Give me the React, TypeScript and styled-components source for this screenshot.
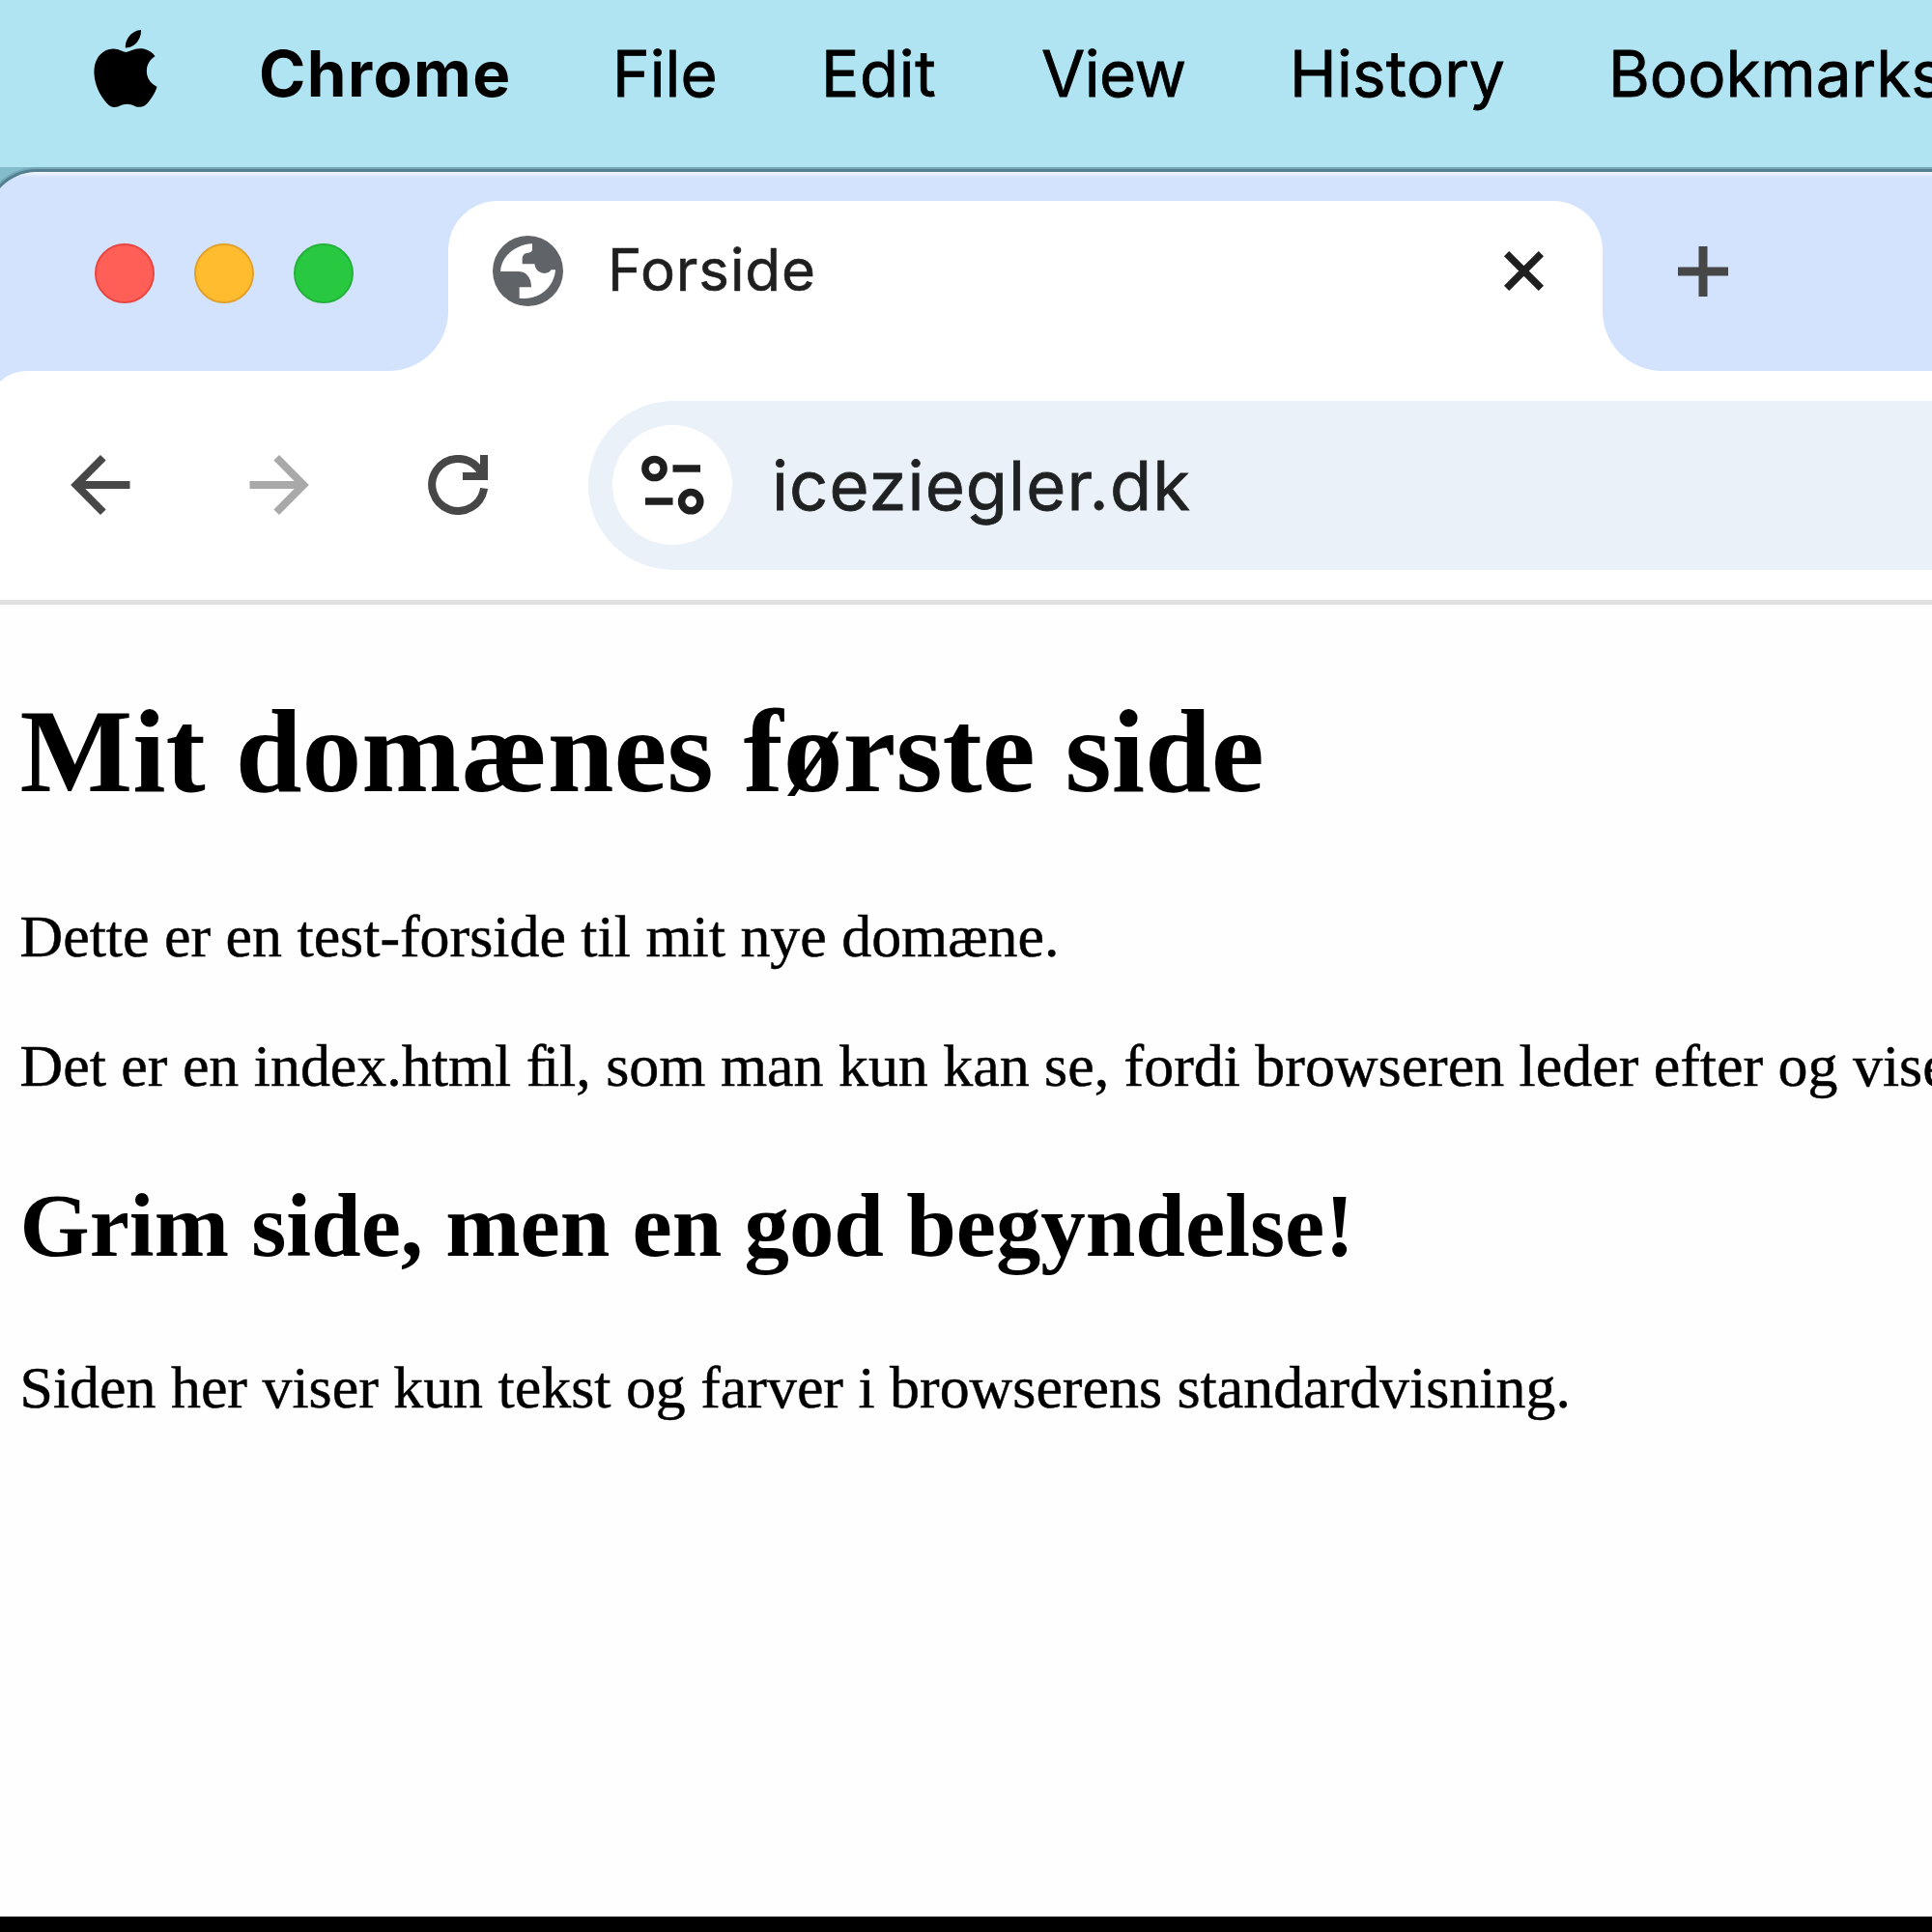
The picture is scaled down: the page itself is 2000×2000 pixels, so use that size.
import React from "react";
import styled, { createGlobalStyle } from "styled-components";

const sans = `Inter, "Liberation Sans", sans-serif`;
const serif = `"Liberation Serif", "Times New Roman", serif`;

const GlobalStyle = createGlobalStyle`
  *, *::before, *::after { box-sizing: border-box; }
  html, body { margin: 0; padding: 0; background: #fefefe; }
  body { overflow: hidden; }
  svg { display: block; flex: none; }
`;

const Desktop = styled.div`
  width: 2000px;
  height: 2000px;
  overflow: hidden;
  display: flex;
  flex-direction: column;
  background: #83bdcc;
`;

const MenuBar = styled.header`
  height: 173px;
  flex: none;
  display: flex;
  align-items: flex-start;
  padding: 31px 0 0 97px;
  margin-bottom: 5px;
  background: #b0e4f3;
  position: relative;
`;

const AppleSlot = styled.div`
  width: 171px;
  flex: none;
`;

const MenuItem = styled.span<{ $width: number; $bold?: boolean; $spacing?: number }>`
  flex: none;
  width: ${(p) => p.$width}px;
  margin-top: 6px;
  font-family: ${sans};
  font-size: 65.5px;
  line-height: 80px;
  font-weight: ${(p) => (p.$bold ? 700 : 400)};
  letter-spacing: ${(p) => p.$spacing ?? 0}px;
  -webkit-text-stroke: ${(p) => (p.$bold ? 0 : 0.8)}px #000;
  white-space: nowrap;
  color: #000;
`;

const Window = styled.main`
  flex: 1;
  min-height: 0;
  margin-left: -13px;
  display: flex;
  flex-direction: column;
  border-top-left-radius: 51px;
  background: linear-gradient(#f3f7fd 0, #e4edfc 3px, #d3e2fd 6px, #d3e2fd 100%);
  box-shadow: 0 0 0 3px #547f90, 0 0 0 5px #74a8b8;
`;

const TabStrip = styled.div`
  height: 206px;
  flex: none;
  display: flex;
  align-items: flex-end;
`;

const Lights = styled.div`
  width: 415px;
  height: 176px;
  padding: 44px 0 0 111px;
  display: flex;
  gap: 41px;
`;

const Light = styled.i<{ $fill: string; $edge: string }>`
  width: 62px;
  height: 62px;
  border-radius: 50%;
  background: ${(p) => p.$fill};
  border: 2px solid ${(p) => p.$edge};
`;

const Flare = styled.i<{ $side: "left" | "right" }>`
  width: 62px;
  height: 62px;
  flex: none;
  background: radial-gradient(
    circle at ${(p) => (p.$side === "left" ? "0 0" : "100% 0")},
    transparent 61.5px,
    #fff 62.5px
  );
`;

const Tab = styled.div`
  width: 1195px;
  height: 176px;
  flex: none;
  display: flex;
  align-items: flex-start;
  padding: 36px 61px 0 46px;
  background: #fff;
  border-radius: 51px 51px 0 0;
`;

const TabTitle = styled.span`
  flex: 1;
  margin: -1px 0 0 46px;
  font-family: ${sans};
  font-size: 60px;
  line-height: 72px;
  letter-spacing: 0.9px;
  -webkit-text-stroke: 0.6px #1f1f1f;
  color: #1f1f1f;
`;

const CloseSlot = styled.span`
  margin-top: 16px;
`;

const NewTab = styled.span`
  height: 176px;
  padding: 47px 0 0 16px;
`;

const Toolbar = styled.nav`
  height: 237px;
  flex: none;
  display: flex;
  align-items: center;
  padding: 0 0 1px 86px;
  background: #fff;
  border-top-left-radius: 41px;
`;

const NavButton = styled.span<{ $color: string; $gap: number }>`
  flex: none;
  margin-right: ${(p) => p.$gap}px;
  color: ${(p) => p.$color};
`;

const Omnibox = styled.div`
  flex: 1;
  height: 175px;
  display: flex;
  align-items: center;
  padding-left: 25px;
  border-radius: 88px 0 0 88px;
  background: #ebf1f9;
`;

const SiteInfo = styled.span`
  width: 124px;
  height: 124px;
  flex: none;
  display: flex;
  align-items: center;
  justify-content: center;
  border-radius: 50%;
  background: #fff;
`;

const Address = styled.span`
  margin: 1px 0 0 41px;
  font-family: ${sans};
  font-size: 70.5px;
  line-height: 84px;
  letter-spacing: 1.05px;
  -webkit-text-stroke: 0.8px #1f2122;
  color: #1f2122;
`;

const Page = styled.article`
  flex: 1;
  min-height: 0;
  padding: 80px 0 0 33.5px;
  border-top: 5px solid #e1e1e1;
  background: #fefefe;
  font-family: ${serif};
  color: #000;
  white-space: nowrap;
`;

const Title = styled.h1`
  margin: 0 0 83px;
  font-size: 123.7px;
  line-height: 144px;
`;

const Paragraph = styled.p`
  margin: 0 0 61.5px;
  font-size: 61.9px;
  line-height: 72px;
  -webkit-text-stroke: 0.5px #000;
`;

const TightPair = styled.span`
  letter-spacing: -3.4px;
`;

const Subtitle = styled.h2`
  margin: 76px 0 77px;
  font-size: 92.8px;
  line-height: 108px;
`;

const Dock = styled.footer`
  height: 16px;
  flex: none;
  background: #000;
  position: relative;
`;

const AppleLogo = () => (
  <svg width="66" height="80" viewBox="2.2 0 19.6 24" fill="#000">
    <path d="M12.152 6.896c-.948 0-2.415-1.078-3.96-1.04-2.04.027-3.91 1.183-4.961 3.014-2.117 3.675-.546 9.103 1.519 12.09 1.013 1.454 2.208 3.09 3.792 3.039 1.52-.065 2.09-.987 3.935-.987 1.831 0 2.35.987 3.96.948 1.637-.026 2.676-1.48 3.676-2.948 1.156-1.688 1.636-3.325 1.662-3.415-.039-.013-3.182-1.221-3.22-4.857-.026-3.04 2.48-4.494 2.597-4.559-1.429-2.09-3.623-2.324-4.39-2.376-2-.156-3.675 1.09-4.61 1.09zM15.53 3.83c.843-1.012 1.4-2.427 1.245-3.83-1.207.052-2.662.805-3.532 1.818-.78.896-1.454 2.338-1.273 3.714 1.338.104 2.715-.688 3.559-1.701" />
  </svg>
);

const Globe = () => (
  <svg width="73" height="73" viewBox="0 0 219 219">
    <circle cx="109.5" cy="109.5" r="109.5" fill="#606367" />
    <path
      fill="#fff"
      d="M123 25C72 27 27 62 24 111H79C103 111 120 128 120 160H83V194C145 203 192 158 195 106H182C176 116 163 119 151 115C139 111 132 102 130 88H92V72C92 59 101 53 111 53C119 53 123 48 123 42Z"
    />
  </svg>
);

const Close = () => (
  <svg width="41" height="41" viewBox="0 0 41 41" stroke="#1f1f1f" strokeWidth="7.4">
    <path d="M2.6 2.6L38.4 38.4M38.4 2.6L2.6 38.4" />
  </svg>
);

const Plus = () => (
  <svg width="52" height="52" viewBox="0 0 52 52" stroke="#474747" strokeWidth="9">
    <path d="M26 0V52M0 26H52" />
  </svg>
);

const Arrow = ({ flip = false }: { flip?: boolean }) => (
  <svg width="62" height="62" viewBox="0 0 62 62" fill="none" stroke="currentColor" strokeWidth="8">
    <g transform={flip ? "matrix(-1 0 0 1 62 0)" : undefined}>
      <path d="M33.8 2.8L5.8 31L33.8 59.2M5.8 31H61.5" />
    </g>
  </svg>
);

const Reload = () => (
  <svg width="62" height="62" viewBox="0 0 62 62" fill="none" stroke="currentColor" strokeWidth="8">
    <path d="M58 34.5A27 27 0 1 1 51 12.5L57 20" />
    <path d="M58 0V22H36" />
  </svg>
);

const Tune = () => (
  <svg width="65" height="62" viewBox="0 0 65 62" fill="none" stroke="#1f1f1f" strokeWidth="7.5">
    <circle cx="13.5" cy="14" r="9.6" />
    <path d="M32.5 14H61M4 48H32.5" />
    <circle cx="51.2" cy="48.2" r="9.6" />
  </svg>
);

const menus: { label: string; width: number; bold?: boolean; spacing?: number }[] = [
  { label: "Chrome", width: 366, bold: true, spacing: 1.4 },
  { label: "File", width: 216 },
  { label: "Edit", width: 228, spacing: 0.6 },
  { label: "View", width: 257, spacing: -0.5 },
  { label: "History", width: 330, spacing: 0.2 },
  { label: "Bookmarks", width: 400 },
];

export default function App() {
  return (
    <>
      <GlobalStyle />
      <Desktop>
        <MenuBar>
          <AppleSlot>
            <AppleLogo />
          </AppleSlot>
          {menus.map((m) => (
            <MenuItem key={m.label} $width={m.width} $bold={m.bold} $spacing={m.spacing}>
              {m.label}
            </MenuItem>
          ))}
        </MenuBar>
        <Window>
          <TabStrip>
            <Lights>
              <Light $fill="#ff5f57" $edge="#e9463f" />
              <Light $fill="#febc2e" $edge="#e2a12b" />
              <Light $fill="#28c840" $edge="#24b23a" />
            </Lights>
            <Flare $side="left" />
            <Tab>
              <Globe />
              <TabTitle>Forside</TabTitle>
              <CloseSlot>
                <Close />
              </CloseSlot>
            </Tab>
            <Flare $side="right" />
            <NewTab>
              <Plus />
            </NewTab>
          </TabStrip>
          <Toolbar>
            <NavButton $color="#474747" $gap={123}>
              <Arrow />
            </NavButton>
            <NavButton $color="#a9a9a9" $gap={123}>
              <Arrow flip />
            </NavButton>
            <NavButton $color="#474747" $gap={104}>
              <Reload />
            </NavButton>
            <Omnibox>
              <SiteInfo>
                <Tune />
              </SiteInfo>
              <Address>iceziegler.dk</Address>
            </Omnibox>
          </Toolbar>
          <Page>
            <Title>Mit domænes første side</Title>
            <Paragraph>Dette er en test-forside til mit nye domæne.</Paragraph>
            <Paragraph>
              Det er en index.html <TightPair>f</TightPair>il, som man kun kan se, fordi browseren
              leder efter og viser
            </Paragraph>
            <Subtitle>Grim side, men en god begyndelse!</Subtitle>
            <Paragraph>Siden her viser kun tekst og farver i browserens standardvisning.</Paragraph>
          </Page>
        </Window>
        <Dock />
      </Desktop>
    </>
  );
}
